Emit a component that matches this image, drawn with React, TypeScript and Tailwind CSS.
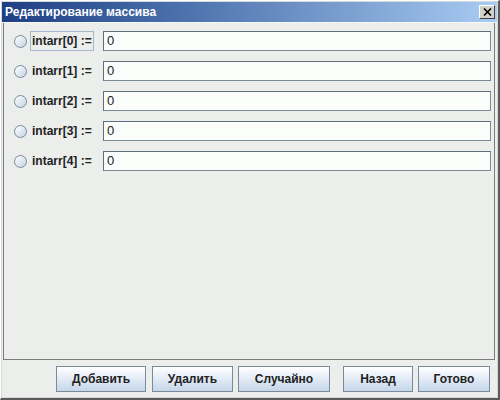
import * as React from "react";

const rows = [0, 1, 2, 3, 4];

const buttons = [
  { label: "Добавить", w: "w-[90px]", ml: "ml-0" },
  { label: "Удалить", w: "w-[81px]", ml: "ml-[6px]" },
  { label: "Случайно", w: "w-[92px]", ml: "ml-[5px]" },
  { label: "Назад", w: "w-[70px]", ml: "ml-[13px]" },
  { label: "Готово", w: "w-[72px]", ml: "ml-[5px]" },
];

function Radio() {
  return (
    <span className="w-[13px] h-[13px] rounded-full border border-[#7a8a99] bg-gradient-to-br from-[#ffffff] to-[#c4d4e6] shrink-0" />
  );
}

export default function App() {
  return (
    <div
      className="w-[500px] h-[400px] flex flex-col bg-[#d8d8d8] border-t border-l border-[#ffffff] border-r-2 border-b-2 border-r-[#5a5a5a] border-b-[#5a5a5a] p-[1px]"
      style={{ fontFamily: '"Liberation Sans", Arial, sans-serif' }}
    >
      {/* title bar */}
      <div className="h-[20px] flex items-center justify-between bg-gradient-to-r from-[#1e3f84] to-[#a8ccf2] pl-[3px] pr-[2px]">
        <span className="text-white font-bold text-[12px] leading-none">
          Редактирование массива
        </span>
        <button className="w-[16px] h-[14px] flex items-center justify-center bg-[#d4d0c8] border-t border-l border-[#ffffff] border-r border-b border-r-[#404040] border-b-[#404040]">
          <svg width="9" height="8" viewBox="0 0 9 8">
            <path d="M1 0.5 L8 7.5 M8 0.5 L1 7.5" stroke="#000" strokeWidth="1.6" />
          </svg>
        </button>
      </div>

      {/* content */}
      <div className="flex-1 flex flex-col bg-[#eceeec] border-t border-[#f8f8f8]">
        <div className="flex-1 flex flex-col gap-[10px] pt-[8px] ml-[1px] mr-[2px] border-l border-r border-b border-[#7c7c7c] pl-[10px] pr-[3px]">
          {rows.map((i) => (
            <div key={i} className="flex items-center h-[20px]">
              <Radio />
              <span
                className={`ml-[3px] w-[64px] h-[20px] flex items-center pl-[1px] font-bold text-[12px] text-[#222] border ${
                  i === 0 ? "border-[#a3b8cc]" : "border-transparent"
                }`}
              >
                intarr[{i}] :=
              </span>
              <div className="ml-[9px] flex-1 h-[20px] flex items-center bg-[#fbfdfb] border border-[#7a8a99] border-t-[#5e6e7e] border-l-[#5e6e7e] pl-[3px] text-[13px] text-[#222]">
                0
              </div>
            </div>
          ))}
        </div>

        {/* buttons */}
        <div className="h-[37px] flex items-center pl-[54px]">
          {buttons.map((b) => (
            <button
              key={b.label}
              className={`${b.w} ${b.ml} h-[26px] flex items-center justify-center border border-[#7a8a99] bg-gradient-to-b from-[#ffffff] to-[#c5d6ea] font-bold text-[12px] text-[#222]`}
            >
              {b.label}
            </button>
          ))}
        </div>
      </div>
    </div>
  );
}
